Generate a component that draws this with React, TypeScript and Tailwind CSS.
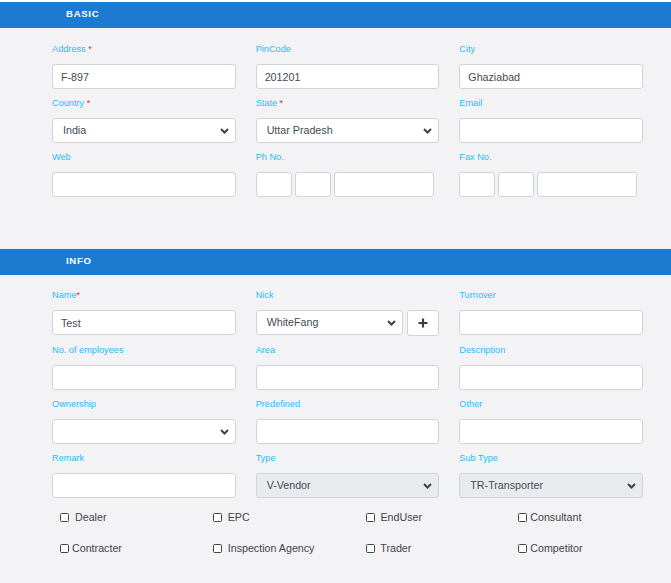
import React from "react";

const font = { fontFamily: '"Liberation Sans", Arial, sans-serif' };

function Label({ text, required, tight }: { text: string; required?: boolean; tight?: boolean }) {
  return (
    <div className="h-[12px] leading-[12px] text-[9.2px] text-[#2bbaf5] mb-[9px] whitespace-nowrap">
      {text}
      {required && <span className="text-[#e8212c] text-[9px]">{tight ? "*" : " *"}</span>}
    </div>
  );
}

function TextBox({ value = "", className = "" }: { value?: string; className?: string }) {
  return (
    <input
      readOnly
      defaultValue={value}
      className={`block h-[25px] w-full bg-white border border-[#cfd4da] rounded-[3px] px-[8px] text-[10.7px] text-[#444a52] outline-none ${className}`}
    />
  );
}

function Chevron() {
  return (
    <svg width="9" height="6" viewBox="0 0 9 6" className="shrink-0">
      <path d="M1 1l3.5 3.5L8 1" fill="none" stroke="#3d4148" strokeWidth="2" />
    </svg>
  );
}

function SelectBox({ value = "", disabled, className = "" }: { value?: string; disabled?: boolean; className?: string }) {
  return (
    <div
      className={`h-[25px] flex items-center justify-between border border-[#cfd4da] rounded-[3px] pl-[10px] pr-[6px] text-[10.7px] text-[#444a52] ${
        disabled ? "bg-[#e8ebee]" : "bg-white"
      } ${className}`}
    >
      <span>{value}</span>
      <Chevron />
    </div>
  );
}

function Field({ label, required, tight, children }: { label: string; required?: boolean; tight?: boolean; children: React.ReactNode }) {
  return (
    <div>
      <Label text={label} required={required} tight={tight} />
      {children}
    </div>
  );
}

function Bar({ title }: { title: string }) {
  return (
    <div className="h-[26px] bg-[#1c7bd0] flex items-center pl-[66px] pb-[2px]">
      <span className="text-white font-bold text-[9.6px] tracking-[0.7px] leading-none">{title}</span>
    </div>
  );
}

function SplitBoxes() {
  return (
    <div className="flex gap-[3px]">
      <TextBox className="!w-[36px]" />
      <TextBox className="!w-[36px]" />
      <TextBox className="!w-[100px]" />
    </div>
  );
}

const checks = [
  { label: " Dealer" },
  { label: " EPC" },
  { label: " EndUser" },
  { label: "Consultant" },
  { label: "Contracter" },
  { label: " Inspection Agency" },
  { label: " Trader" },
  { label: "Competitor" },
];

export default function App() {
  return (
    <div style={font} className="min-h-screen bg-[#f3f3f6] border-t-2 border-white">
      <Bar title="BASIC" />
      <div className="pt-[15px] pl-[52px] pb-[52px]">
        <div className="grid grid-cols-3 w-[591px] gap-x-[20px] gap-y-[8px]">
          <Field label="Address" required>
            <TextBox value="F-897" />
          </Field>
          <Field label="PinCode">
            <TextBox value="201201" />
          </Field>
          <Field label="City">
            <TextBox value="Ghaziabad" />
          </Field>
          <Field label="Country" required>
            <SelectBox value="India" />
          </Field>
          <Field label="State" required>
            <SelectBox value="Uttar Pradesh" />
          </Field>
          <Field label="Email">
            <TextBox />
          </Field>
          <Field label="Web">
            <TextBox />
          </Field>
          <Field label="Ph No.">
            <SplitBoxes />
          </Field>
          <Field label="Fax No.">
            <SplitBoxes />
          </Field>
        </div>
      </div>

      <Bar title="INFO" />
      <div className="pt-[14px] pl-[52px] pb-[30px]">
        <div className="grid grid-cols-3 w-[591px] gap-x-[20px] gap-y-[8px]">
          <Field label="Name" required tight>
            <TextBox value="Test" />
          </Field>
          <Field label="Nick">
            <div className="flex gap-[4px]">
              <SelectBox value="WhiteFang" className="flex-1" />
              <button className="w-[32px] h-[26px] bg-white border border-[#cfd4da] rounded-[3px] flex items-center justify-center">
                <svg width="10" height="10" viewBox="0 0 10 10">
                  <path d="M5 0.5v9M0.5 5h9" stroke="#3a3f46" strokeWidth="2.2" />
                </svg>
              </button>
            </div>
          </Field>
          <Field label="Turnover">
            <TextBox />
          </Field>
          <Field label="No. of employees">
            <TextBox />
          </Field>
          <Field label="Area">
            <TextBox />
          </Field>
          <Field label="Description">
            <TextBox />
          </Field>
          <Field label="Ownership">
            <SelectBox />
          </Field>
          <Field label="Predefined">
            <TextBox />
          </Field>
          <Field label="Other">
            <TextBox />
          </Field>
          <Field label="Remark">
            <TextBox />
          </Field>
          <Field label="Type">
            <SelectBox value="V-Vendor" disabled />
          </Field>
          <Field label="Sub Type">
            <SelectBox value="TR-Transporter" disabled />
          </Field>
        </div>

        <div className="grid grid-cols-4 w-[611px] ml-[8px] mt-[9px] gap-y-[11px]">
          {checks.map((c) => (
            <label key={c.label} className="h-[20px] flex items-center gap-[3px] text-[10.7px] text-[#3f444b] whitespace-pre">
              <span className="w-[9px] h-[9px] border border-[#3f444b] rounded-[1.5px] bg-white shrink-0" />
              {c.label}
            </label>
          ))}
        </div>
      </div>
    </div>
  );
}
